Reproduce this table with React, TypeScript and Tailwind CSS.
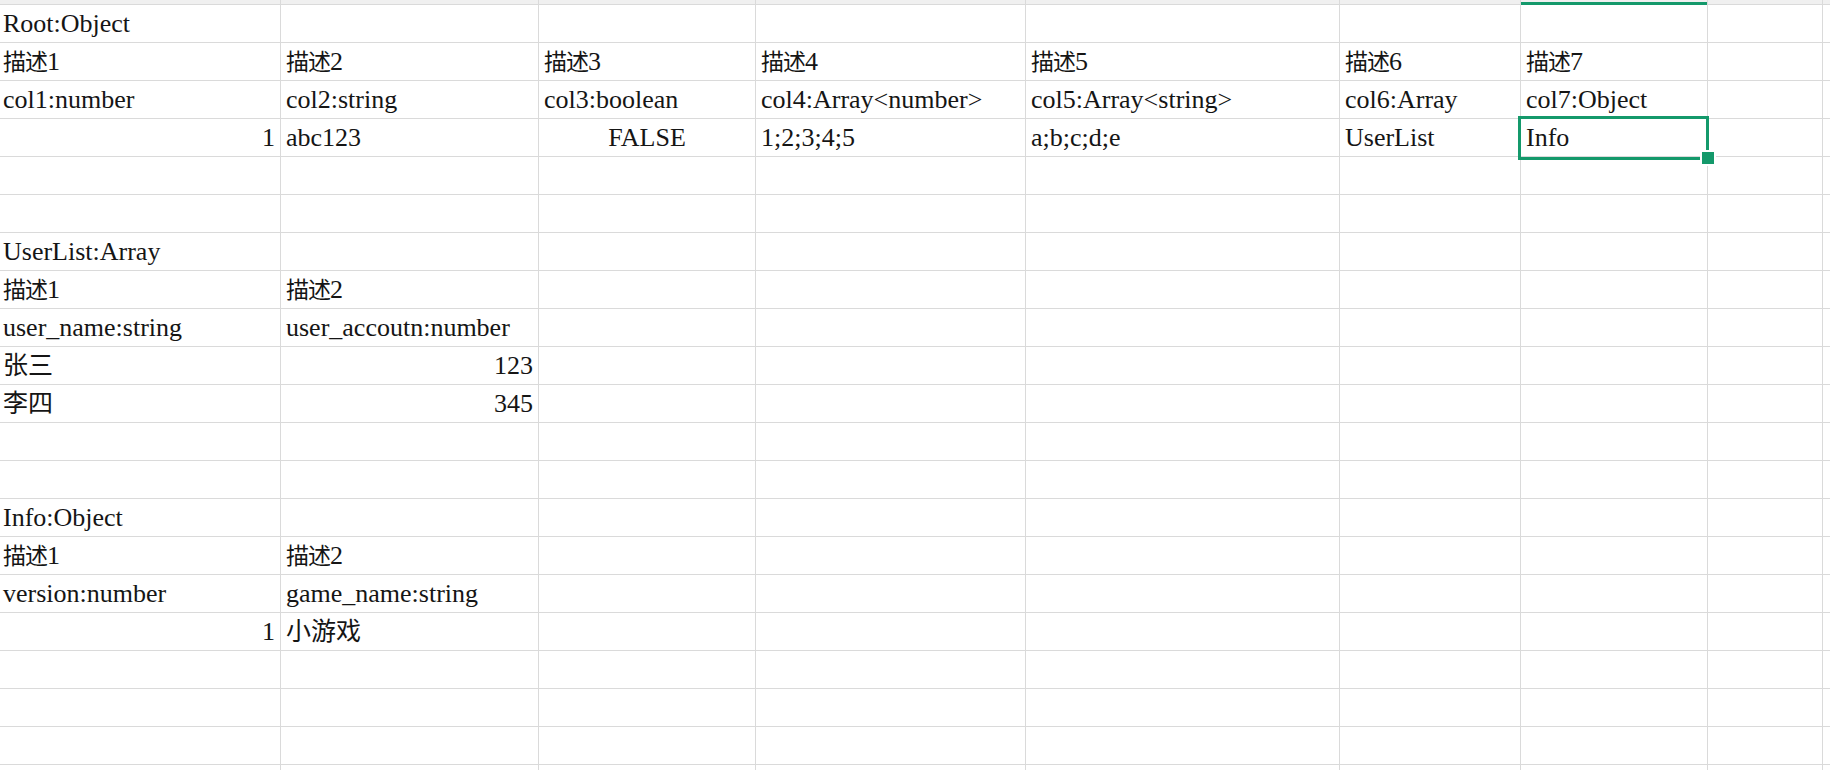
import React from 'react';

type Align = 'left' | 'right' | 'center';
type Cell = { text?: string; align?: Align };

// column widths including the 1px right grid line
const colWidths = [281, 258, 217, 270, 314, 181, 187, 115, 40];
const gridCols = 'grid-cols-[281px_258px_217px_270px_314px_181px_187px_115px_40px]';

const t = (text: string, align: Align = 'left'): Cell => ({ text, align });

const rows: Cell[][] = [
  [t('Root:Object')],
  [t('描述1'), t('描述2'), t('描述3'), t('描述4'), t('描述5'), t('描述6'), t('描述7')],
  [
    t('col1:number'),
    t('col2:string'),
    t('col3:boolean'),
    t('col4:Array<number>'),
    t('col5:Array<string>'),
    t('col6:Array'),
    t('col7:Object'),
  ],
  [t('1', 'right'), t('abc123'), t('FALSE', 'center'), t('1;2;3;4;5'), t('a;b;c;d;e'), t('UserList'), t('Info')],
  [],
  [],
  [t('UserList:Array')],
  [t('描述1'), t('描述2')],
  [t('user_name:string'), t('user_accoutn:number')],
  [t('张三'), t('123', 'right')],
  [t('李四'), t('345', 'right')],
  [],
  [],
  [t('Info:Object')],
  [t('描述1'), t('描述2')],
  [t('version:number'), t('game_name:string')],
  [t('1', 'right'), t('小游戏')],
  [],
  [],
  [],
  [],
];

// CJK runs get their own size so they sit like the sheet's Songti glyphs
const CellText: React.FC<{ text: string }> = ({ text }) => {
  const parts = text.split(/([\u4e00-\u9fff]+)/).filter(Boolean);
  return (
    <span className="leading-none">
      {parts.map((p, i) =>
        /[\u4e00-\u9fff]/.test(p) ? (
          <span key={i} className={p === '描述' ? 'text-[23px] tracking-[-1px]' : 'text-[25px]'}>
            {p}
          </span>
        ) : (
          <span key={i}>{p}</span>
        )
      )}
    </span>
  );
};

const SelectedOverlay: React.FC = () => (
  <>
    <div className="pointer-events-none absolute -left-[3px] -top-[3px] z-10 h-[44px] w-[191px] border-[3px] border-[#14996b]" />
    <div className="pointer-events-none absolute left-[179px] top-[31px] z-20 h-[16px] w-[16px] border-2 border-white bg-[#14996b]" />
  </>
);

const GridCell: React.FC<{ cell?: Cell; col: number; selected?: boolean }> = ({ cell, col, selected }) => {
  const align = cell?.align ?? 'left';
  const justify =
    align === 'right' ? 'justify-end pr-[5px]' : align === 'center' ? 'justify-center' : col === 0 ? 'pl-[3px]' : 'pl-[5px]';
  return (
    <div
      className={`relative flex h-[38px] items-end whitespace-nowrap border-b border-r border-[#dadada] pb-[5px] ${justify}`}
    >
      {cell?.text && <CellText text={cell.text} />}
      {selected && <SelectedOverlay />}
    </div>
  );
};

export default function App() {
  return (
    <div
      className="h-[770px] w-[1830px] overflow-hidden bg-white text-[26px] text-[#151515]"
      style={{ fontFamily: '"Liberation Serif", "Noto Sans CJK SC", serif' }}
    >
      {/* column header strip, mostly scrolled away */}
      <div className={`grid ${gridCols}`}>
        {colWidths.map((_, i) =>
          i === 6 ? (
            <div key={i} className="flex h-[5px] flex-col border-r border-[#dadada]">
              <div className="h-[2px] bg-[#f0f0f0]" />
              <div className="h-[3px] bg-[#14996b]" />
            </div>
          ) : (
            <div key={i} className="h-[5px] border-b border-r border-[#dadada] bg-[#f0f0f0]" />
          )
        )}
      </div>

      {rows.map((row, r) => (
        <div key={r} className={`grid ${gridCols}`}>
          {colWidths.map((_, c) => (
            <GridCell key={c} cell={row[c]} col={c} selected={r === 3 && c === 6} />
          ))}
        </div>
      ))}
    </div>
  );
}
